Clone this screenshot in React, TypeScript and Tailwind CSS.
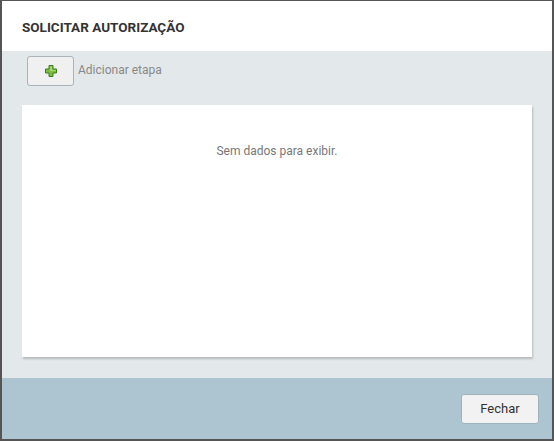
import React from 'react';

function PlusIcon() {
  return (
    <svg width="12" height="12" viewBox="0 0 12 12" aria-hidden="true">
      <path
        d="M4 0.5h4v3.5h3.5v4H8v3.5H4V8H0.5V4H4z"
        fill="#7bbd3e"
        stroke="#3f7a1c"
        strokeWidth="1"
      />
      <path d="M5 1.5h2v3.5h3.5v1H7V6H5V5H1.5V5H5z" fill="#a6d873" />
    </svg>
  );
}

export default function App() {
  return (
    <div
      className="h-[441px] w-[554px] bg-[#555555] pb-[2px] pl-[2px] pr-[2px] pt-[1px]"
      style={{ fontFamily: 'Roboto, "Liberation Sans", sans-serif' }}
    >
      <div className="flex h-full flex-col bg-[#e3e8eb]">
        <div className="flex h-[50px] items-center bg-white pl-[20px] pt-[3px]">
          <h1 className="text-[13.5px] font-bold text-[#333333]">SOLICITAR AUTORIZAÇÃO</h1>
        </div>

        <div className="flex flex-1 flex-col px-[20px]">
          <div className="flex items-start gap-[4px] pl-[5px] pt-[5px]">
            <button className="flex h-[30px] w-[47px] items-center justify-center rounded-[3px] border border-[#a9b3ba] bg-[#f0f0f0]">
              <PlusIcon />
            </button>
            <span className="pt-[5px] text-[12px] text-[#888888]">Adicionar etapa</span>
          </div>

          <div className="mt-[19px] h-[252px] bg-white shadow-[1px_2px_2px_rgba(0,0,0,0.2)]">
            <p className="pt-[37px] text-center text-[12px] text-[#777777]">Sem dados para exibir.</p>
          </div>
        </div>

        <div className="flex h-[61px] items-center justify-end bg-[#adc4d1] pr-[13px]">
          <button className="h-[30px] w-[78px] rounded-[3px] border border-[#9fb3bf] bg-[#f2f2f2] text-[13px] text-[#333333]">
            Fechar
          </button>
        </div>
      </div>
    </div>
  );
}
